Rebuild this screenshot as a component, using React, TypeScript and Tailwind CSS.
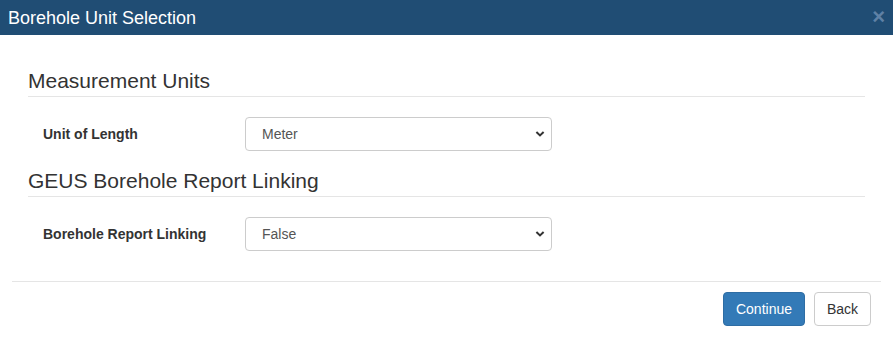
import React from "react";

function Chevron() {
  return (
    <svg width="10" height="7" viewBox="0 0 10 7" className="pointer-events-none absolute right-[7px] top-1/2 -translate-y-1/2">
      <path d="M1.4 1.5 L5 4.9 L8.6 1.5" fill="none" stroke="#333" strokeWidth="2" />
    </svg>
  );
}

function SelectBox({ value }: { value: string }) {
  return (
    <div className="relative w-[307px] h-[34px]">
      <select
        defaultValue={value}
        className="appearance-none w-full h-full border border-[#ccc] rounded-[4px] bg-white pl-[16px] text-[14px] text-[#555] outline-none"
        style={{ fontFamily: "'Liberation Sans', Arial, sans-serif" }}
      >
        <option>{value}</option>
      </select>
      <Chevron />
    </div>
  );
}

export default function App() {
  return (
    <div className="w-[893px] h-[343px] bg-white text-[#333]" style={{ fontFamily: "'Liberation Sans', Arial, sans-serif" }}>
      <div className="h-[35px] bg-[#204d74] flex items-center justify-between pl-[8px] pr-[8px]">
        <span className="text-white text-[18px] leading-none">Borehole Unit Selection</span>
        <span className="text-[#5f81a5] text-[22px] font-bold leading-none mr-[0px] mt-[-2px]">×</span>
      </div>
      <div className="px-[28px] pt-[34px]">
        <div className="border-b border-[#e5e5e5] pb-[4px] text-[21px] leading-[23px]">Measurement Units</div>
        <div className="flex items-center mt-[20px]">
          <div className="w-[217px] pl-[15px] text-[14px] font-bold">Unit of Length</div>
          <SelectBox value="Meter" />
        </div>
        <div className="border-b border-[#e5e5e5] pb-[4px] text-[21px] leading-[23px] mt-[18px]">GEUS Borehole Report Linking</div>
        <div className="flex items-center mt-[20px]">
          <div className="w-[217px] pl-[15px] text-[14px] font-bold">Borehole Report Linking</div>
          <SelectBox value="False" />
        </div>
      </div>
      <div className="mx-[12px] mt-[30px] border-t border-[#e5e5e5] pt-[10px] pr-[10px] flex justify-end gap-[9px]">
        <button className="h-[34px] w-[82px] rounded-[4px] bg-[#337ab7] border border-[#2e6da4] text-white text-[14px]">Continue</button>
        <button className="h-[34px] w-[57px] rounded-[4px] bg-white border border-[#ccc] text-[#333] text-[14px]">Back</button>
      </div>
    </div>
  );
}
